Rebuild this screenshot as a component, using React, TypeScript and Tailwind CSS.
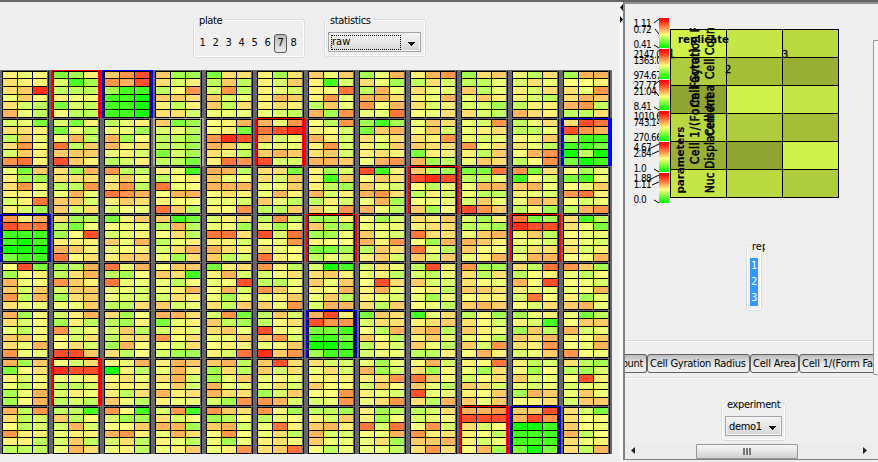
import type { ReactNode } from 'react';

// Colour scale from red (0) over yellow (8) to green (f).
const SCALE: Record<string, string> = {
  '0': '#ff3019', '1': '#ff4f2b', '2': '#ff763c', '3': '#ff964c', '4': '#ffb35c',
  '5': '#ffcb69', '6': '#ffde72', '7': '#fff07a', '8': '#ffff80', '9': '#eeff78',
  a: '#d9ff6d', b: '#bfff60', c: '#a4ff52', d: '#7bff3e', e: '#45ff23', f: '#14ff0a',
};

// One string per plate row; wells are separated by spaces, 6 x 3 values each.
const PLATE = [
  '7986776509586ab49b dc7aecbbb799dab8bb 531341ceeeefeefeef 5cc6a7b835567b766a d66b5ba3b5a95b6999 7c67a579a7457679ab 5957ea782739b594c3 c9469cb49446384992 743b6a6997946a7896 c65bb95b9957aac6ab 9b6a697a67abb77467 c4488769364543bbb6',
  'a9d667b59638a57327 ad7d9b84b2b5555157 b9799c4c847697aba7 5dca9bbbcbbcdacbbd 87487d30145a67b723 4932104a99995451aa 8b378a47a73a65a445 cecd546967a5767943 95685a673566d774cb 9a39769a93967b5956 b96bb989569b843b83 612134beeeedfbfdfe',
  '9d57cc639778a727ac 6c4666bb394955a5a6 3bb75963b234756a89 79eb8729884478825b 44b59844486799a783 66d6a599594759bbb5 7ca7e57bc4a7b7a593 1e785659a43694c49b 5bc1018b9b7a8995c8 dd2bb99449bba59135 3d6e8a54979a945b7c 8c9de98953278a9b43',
  '374122eeeefefffdee 6cbbd8c81777457286 d75899a97594987755 5edb4b86bb97a649c6 a7698c22677a4675ba b3b9c81a2893698278 cc75cccc9788ddcb9a 8ca99959a473b5675a 6757662668c429b5a5 ac7bbc954457588974 2dc01195b99aa66944 6eb69d89979a6a7894',
  '81dc874985a53b4699 cb4b64357a55c65995 294bc829999a9aabb6 85556e9b8974a675a9 d7674a98184a9c96b5 37ba86bb9358975593 afe65759578495ba44 a6997b81674979a6b5 b17ab95aa87b9c989b 3cc6b6689556877545 6b2b87481799a288a6 35c9b889a9847c9549',
  '4c86a89b8558694399 a74c7b3a98a686a115 6c8bc7a5bb66c486b8 446d97a793868a6acc a3d5bc6599958777a2 b5ab8618953a985053 417133ddeeedffecee d56a668b458bb7aa99 e9676554b75959bbb7 b8c68a57998b5a3847 c977aec5b564673a95 9db8554a9785894389',
  '4c5d867a89b8c94c84 8a6011997bbaa79bab 894f7b8697777b659b 74594764a85a476799 54bc6bc95499466ac3 5165a698996aca534a 6aa96a777588883a93 9c94ca763a5879a963 84a6c825859b1996b4 7829c6a8656a785595 7ba8c85a99a9c45876 6bcbca817a99959a55',
  '4b36ba8ba37777bbbb bbe5b8a4a977a5b946 38eacc885437a6b97b a3e6a844c94679b975 356cb854a8389c9973 38cb9892796b768652 bbc7a55474aa5998b9 7cb7c82a289496c99b ba6a9883a376554636 4431116a878b7a984c 551413ffeeeeeeedfd 6ad6885894b86976b4',
].map((row) => row.split(' '));

const MARKS: Record<string, string> = {
  '0-1': 'bg-[#ff0000]', '0-2': 'bg-[#0000ff]', '1-3': 'bg-[#aaa290]', '1-5': 'bg-[#ff0000]',
  '1-11': 'bg-[#0000ff]', '2-8': 'bg-[#ff0000]', '3-0': 'bg-[#0000ff]', '3-6': 'bg-[#ff0000]',
  '3-10': 'bg-[#ff0000]', '5-6': 'bg-[#0000ff]', '6-1': 'bg-[#ff0000]', '7-9': 'bg-[#ff0000]',
  '7-10': 'bg-[#0000ff]',
};

function Well({ code, mark = 'bg-[#666666]' }: { code: string; mark?: string }) {
  return (
    <div className={`h-[48px] w-[51px] pt-px pl-[2px] ${mark}`}>
      <div className="flex h-[47px] w-[47px] border-r border-black">
        <div className={`w-[46px] pr-px ${mark}`}>
          <div className="grid grid-cols-[14px_14px_14px] grid-rows-[6px_7px_7px_6px_7px_7px] gap-px bg-black py-px pl-px">
            {code.split('').map((c, i) => (
              <div key={i} style={{ backgroundColor: SCALE[c] }} />
            ))}
          </div>
        </div>
      </div>
    </div>
  );
}

function Group({ title, className, legend = '', children }: { title: string; className: string; legend?: string; children: ReactNode }) {
  return (
    <div className={`rounded-[3px] border border-[#d5dfe5] shadow-[inset_0_0_0_1px_#fff] ${className}`}>
      <div className={`-mt-[6px] ml-[3px] h-[14px] w-fit overflow-hidden bg-[#efefef] px-[2px] leading-[14px] ${legend}`}>{title}</div>
      {children}
    </div>
  );
}

function Arrow() {
  return (
    <svg width="7" height="4" viewBox="0 0 7 4" className="block shrink-0" shapeRendering="crispEdges">
      <path d="M0 0h7L3.5 4z" fill="#000" />
    </svg>
  );
}

const BARS = [
  ['1.11', '0.72', '0.41'],
  ['2147.0', '1363.0', '974.67'],
  ['27.77', '21.04', '8.41'],
  ['1010.67', '743.14', '270.66'],
  ['4.67', '2.84', '1.0'],
  ['1.88', '1.11', '0.0'],
];
const GREENS = ['#d0f24a', '#c5e646', '#bad941', '#aecc3d', '#a4be38', '#99b034', '#8fa432'];
const VERTICAL: [string, number, number, number][] = [
  ['Cell Count', 714, 79, 56],
  ['Cell Area', 714, 136, 51],
  ['Nuc Displacement', 714, 193, 98],
  ['Cell Gyration Radius', 699, 107, 111],
  ['Cell 1/(Form Factor)', 699, 164, 116],
];

function ReplicateChart() {
  return (
    <svg viewBox="625 4 248 216" width="248" height="216" className="block shrink-0 font-['DejaVu_Sans_Condensed','DejaVu_Sans',sans-serif] tracking-normal">
      <defs>
        <linearGradient id="ramp" x1="0" y1="0" x2="0" y2="1">
          <stop offset="0" stopColor="#ff0000" />
          <stop offset="0.1" stopColor="#ff1a0d" />
          <stop offset="0.55" stopColor="#ffff80" />
          <stop offset="0.95" stopColor="#12ff08" />
          <stop offset="1" stopColor="#00ff00" />
        </linearGradient>
        <clipPath id="labels"><rect x="630" y="10" width="29" height="200" /></clipPath>
        <clipPath id="names"><rect x="670" y="28" width="170" height="170" /></clipPath>
      </defs>
      <g shapeRendering="crispEdges">
        {BARS.map((_, i) => (
          <rect key={i} x="659" y={18 + i * 31} width="10" height="30" fill="url(#ramp)" />
        ))}
        {Array.from({ length: 18 }, (_, i) => (
          <rect key={i} x={670.5 + (i % 3) * 56} y={29.5 + Math.floor(i / 3) * 28} width="56" height="28" fill={GREENS[i % 7]} stroke="#000" />
        ))}
      </g>
      <g clipPath="url(#labels)" fontSize="10" letterSpacing="-0.6">
        {BARS.map((b, i) => (
          <g key={i}>
            <text x="633.5" y={27 + i * 31}>{b[0]}</text>
            <text x="633.5" y={33 + i * 31}>{b[1]}</text>
            <text x="633.5" y={48 + i * 31}>{b[2]}</text>
            {i !== 1 && i !== 3 && (
              <path
                d={i < 4 ? `M654 ${23 + i * 31}l5-4M655 ${29 + i * 31}l4 5M654 ${45 + i * 31}l5 3` : `M649 ${25 + i * 31}l10-5M652 ${30 + i * 31}l7-3M654 ${45 + i * 31}l5 3`}
                stroke="#000"
                fill="none"
              />
            )}
          </g>
        ))}
      </g>
      <g clipPath="url(#names)" fontSize="11.5" stroke="#000" strokeWidth="0.5">
        {VERTICAL.map(([t, x, y, len]) => (
          <text key={t} transform={`translate(${x} ${y}) rotate(-90)`} textLength={len}>{t}</text>
        ))}
        <text x="668" y="58">1</text>
      </g>
      <g fontSize="11">
        <text x="725" y="73" strokeWidth="0.3" stroke="#000">2</text>
        <text x="782" y="58" strokeWidth="0.3" stroke="#000">3</text>
        <text x="678" y="43" fontWeight="bold" textLength="51" lengthAdjust="spacingAndGlyphs">replicate</text>
        <text transform="translate(684 193.500) rotate(-90)" fontWeight="bold" textLength="67" lengthAdjust="spacingAndGlyphs">parameters</text>
      </g>
    </svg>
  );
}

function Toggle({ className, children }: { className: string; children: ReactNode }) {
  return (
    <div className={`flex h-[19px] shrink-0 items-center overflow-hidden rounded-[3px] border border-[#606060] bg-linear-to-b from-[#bcbcbc] via-[#e6e6e6] to-[#f0f0f0] pb-px whitespace-nowrap ${className}`}>
      {children}
    </div>
  );
}

export default function App() {
  return (
    <div className="flex h-[462px] w-[878px] flex-col overflow-hidden bg-[#efefef] font-['DejaVu_Sans_Condensed','DejaVu_Sans',sans-serif] text-[11px] leading-none tracking-[-0.35px] text-black">
      <div className="h-[2px] shrink-0 bg-[#666666]" />
      <div className="flex h-[460px]">
        <div className="w-[620px] shrink-0">
          <div className="flex h-[68px] pt-[17px] pl-[193px]">
            <Group title="plate" className="h-[39px] w-[112px]">
              <div className="mt-[5px] flex h-[20px] items-center pl-[2px]">
                {[1, 2, 3, 4, 5, 6, 7, 8].map((n) => (
                  <div
                    key={n}
                    className={n === 7 ? 'flex h-[19px] w-[13px] items-center justify-center rounded-[3px] border border-[#555] bg-linear-to-b from-[#b8b8b8] to-[#ececec] pb-[2px]' : 'w-[13px] pb-[2px] text-center'}
                  >
                    {n}
                  </div>
                ))}
              </div>
            </Group>
            <Group title="statistics" className="ml-[19px] h-[38px] w-[102px]">
              <div className="mt-[4px] ml-[3px] flex h-[20px] w-[93px] items-center border border-[#a5a5a9] bg-linear-to-b from-[#f4f4f4] via-[#e8e8e8] to-[#d2d2d2] shadow-[inset_0_0_0_1px_#f4f4f4]">
                <div className="ml-[2px] flex h-[15px] w-[70px] items-center border border-dotted border-black pb-px tracking-normal">raw</div>
                <div className="mt-[3px] ml-[7px]"><Arrow /></div>
              </div>
            </Group>
          </div>
          <div className="grid w-[612px] grid-cols-12">
            {PLATE.map((row, r) => row.map((code, c) => <Well key={`${r}-${c}`} code={code} mark={MARKS[`${r}-${c}`]} />))}
          </div>
        </div>

        <div className="w-[3px] shrink-0 bg-[#f8f8f8]">
          <svg width="3" height="24" viewBox="0 0 3 24" className="block">
            <path d="M3 2v7L0 5.500zM0 14v7l3-3.500z" fill="#000" />
          </svg>
        </div>

        <div className="flex h-[458px] w-[250px] shrink-0 flex-col overflow-hidden border-t-2 border-b border-l-2 border-t-[#8c9196] border-b-[#7d8287] border-l-[#7d8287]">
          <ReplicateChart />
          <div className="flex h-[120px] shrink-0 pt-[25px] pl-[121px]">
            <Group title="rep" className="h-[66px] w-[16px]" legend="w-[15px]! tracking-normal">
              <div className="mt-[4px] ml-[3px] w-[8px] bg-[#3399ff] text-center text-white">
                {[1, 2, 3].map((n) => <div key={n} className="h-[16px] leading-[16px]">{n}</div>)}
              </div>
            </Group>
          </div>
          <div className="flex h-[38px] shrink-0 items-start border-y border-[#d5dfe5] pt-[13px] shadow-[inset_0_1px_0_#fff,0_1px_0_#fff]">
            <Toggle className="w-[22px] justify-end rounded-l-none border-l-0 pr-[3px]">Cell Count</Toggle>
            <Toggle className="w-[103px] pl-[2px] tracking-[-0.25px]">Cell Gyration Radius</Toggle>
            <Toggle className="w-[49px] pl-[2px] tracking-[-0.2px]">Cell Area</Toggle>
            <Toggle className="w-[112px] pl-[2px] tracking-[-0.2px]">Cell 1/(Form Factor)</Toggle>
          </div>
          <div className="flex h-[65px] shrink-0 pt-[25px] pl-[96px]">
            <Group title="experiment" className="h-[38px] w-[65px]" legend="whitespace-nowrap">
              <div className="mt-[4px] ml-[3px] flex h-[20px] w-[57px] items-center border border-[#a5a5a9] bg-linear-to-b from-[#f4f4f4] to-[#d6d6d6] pl-[3px] shadow-[inset_0_0_0_1px_#f4f4f4]">
                <span className="w-[40px]">demo1</span>
                <div className="mt-[3px]"><Arrow /></div>
              </div>
            </Group>
          </div>
          <div className="flex h-[16px] shrink-0 items-center bg-[#ececec]">
            <svg width="71" height="16" viewBox="0 0 71 16"><path d="M10 4v7L6 7.500z" fill="#222" /></svg>
            <div className="flex h-[15px] w-[102px] items-center justify-center gap-px rounded-[1px] border border-[#979797] bg-linear-to-b from-[#f5f5f5] via-[#e6e6e6] to-[#cfcfcf]">
              <div className="h-[7px] w-[2px] bg-[#777]" />
              <div className="h-[7px] w-[2px] bg-[#777]" />
              <div className="h-[7px] w-[2px] bg-[#777]" />
            </div>
            <svg width="75" height="16" viewBox="0 0 75 16"><path d="M65 4v7l4-3.500z" fill="#222" /></svg>
          </div>
        </div>

        <div className="h-[458px] grow border-t-2 border-b border-t-[#8c9196] border-b-[#7d8287] pt-[36px]">
          <div className="h-[335px] rounded-l-[2px] border-y border-l border-[#979797] bg-[#f6f6f6]" />
        </div>
      </div>
    </div>
  );
}
